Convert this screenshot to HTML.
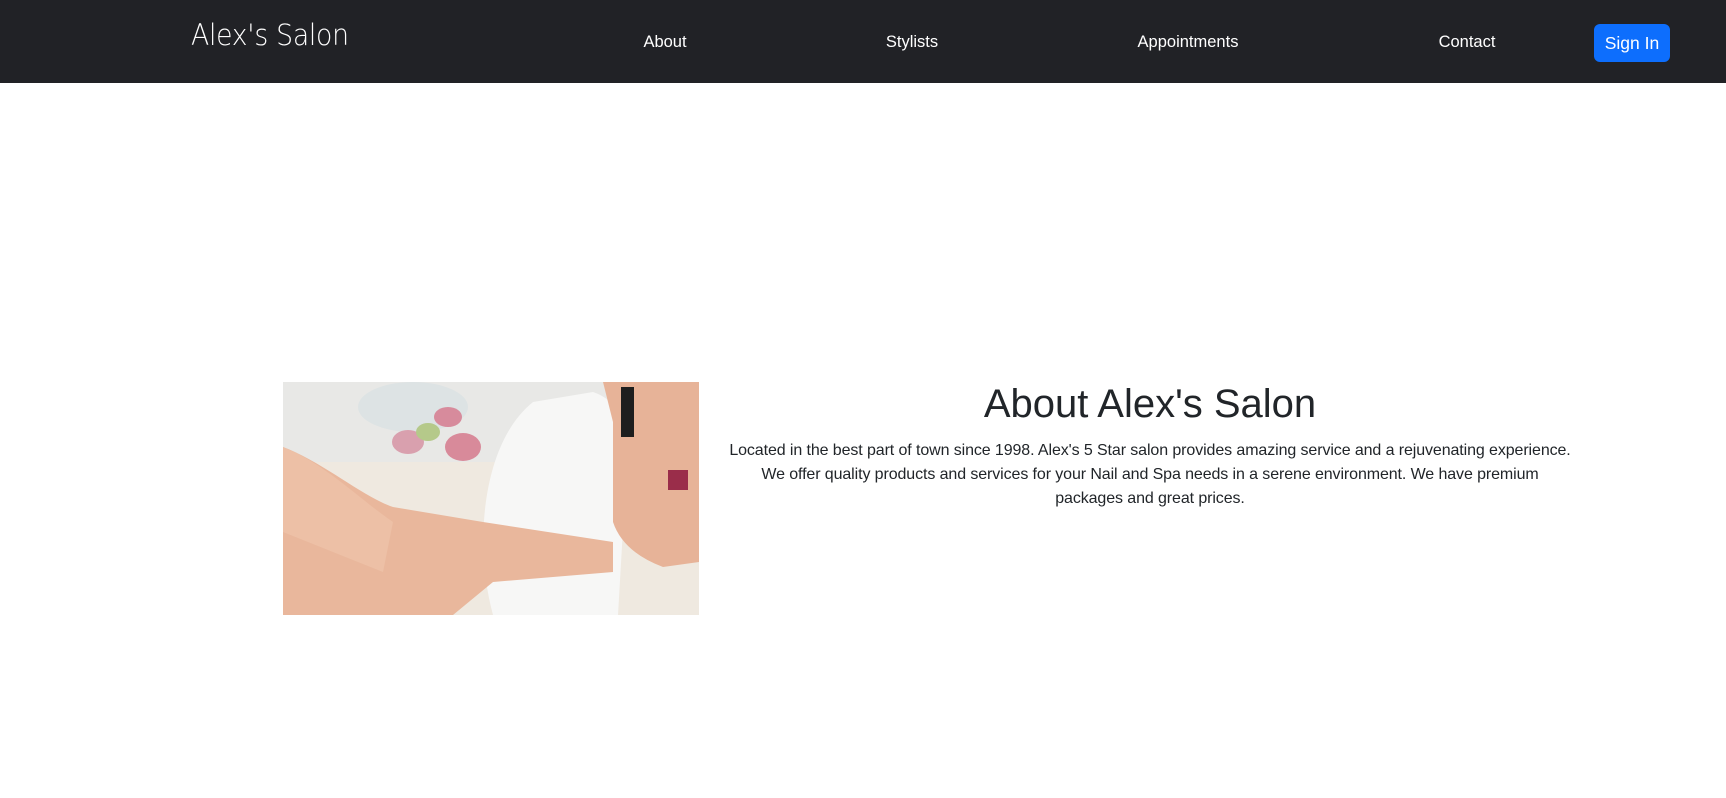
<!DOCTYPE html>
<html><head><meta charset="utf-8"><style>
*{margin:0;padding:0;box-sizing:border-box}
body{width:1726px;height:798px;background:#fff;font-family:"Liberation Sans",sans-serif;position:relative;overflow:hidden}
nav{position:absolute;left:0;top:0;width:1726px;height:83px;background:#212226}
.logo{position:absolute;left:191px;top:18px;color:#fff;font-size:29px;font-family:"DejaVu Sans","Liberation Sans",sans-serif;font-weight:200;letter-spacing:-0.3px;transform:scaleX(0.92);transform-origin:left}
.nl{position:absolute;top:33px;color:#fff;font-size:16.5px;transform:translateX(-50%)}
.btn{position:absolute;left:1594px;top:24px;width:76px;height:38px;background:#0d6efd;border-radius:6px;color:#fff;font-size:17.5px;text-align:center;line-height:38px}
.img{position:absolute;left:283px;top:382px;width:416px;height:233px}
h1{position:absolute;left:700px;width:900px;text-align:center;top:382px;font-weight:400;font-size:40px;color:#212529}
p{position:absolute;left:700px;width:900px;text-align:center;top:439px;font-size:16px;line-height:24px;color:#212529;letter-spacing:-0.1px}
</style></head><body>
<nav>
<div class="logo">Alex's Salon</div>
<div class="nl" style="left:665px">About</div>
<div class="nl" style="left:912px">Stylists</div>
<div class="nl" style="left:1188px">Appointments</div>
<div class="nl" style="left:1467px">Contact</div>
<div class="btn">Sign In</div>
</nav>
<svg class="img" viewBox="0 0 416 233" preserveAspectRatio="none">
<rect width="416" height="233" fill="#efe9e0"/>
<rect width="416" height="80" fill="#e8e8e6"/>
<ellipse cx="130" cy="25" rx="55" ry="25" fill="#dde3e4"/>
<path d="M210 233 C190 160 200 60 250 20 L310 10 Q340 20 345 60 L335 233Z" fill="#f7f7f6"/>
<ellipse cx="180" cy="65" rx="18" ry="14" fill="#d88a9a"/>
<ellipse cx="125" cy="60" rx="16" ry="12" fill="#d9a0ae"/>
<ellipse cx="165" cy="35" rx="14" ry="10" fill="#d78b9c"/>
<ellipse cx="145" cy="50" rx="12" ry="9" fill="#b5c98a"/>
<path d="M0 65 C40 80 80 115 110 125 L200 140 L330 160 L330 190 L210 200 L170 233 L0 233Z" fill="#e9b79c"/>
<path d="M0 65 C40 80 80 120 110 140 L100 190 L0 150Z" fill="#edc0a6"/>
<path d="M320 0 L416 0 L416 180 L380 185 Q340 170 330 140 L330 40Z" fill="#e7b398"/>
<rect x="338" y="5" width="13" height="50" fill="#1e1e1e"/>
<rect x="385" y="88" width="20" height="20" fill="#9a2d4a"/>
</svg>
<h1>About Alex's Salon</h1>
<p>Located in the best part of town since 1998. Alex's 5 Star salon provides amazing service and a rejuvenating experience.<br>We offer quality products and services for your Nail and Spa needs in a serene environment. We have premium<br>packages and great prices.</p>
</body></html>
